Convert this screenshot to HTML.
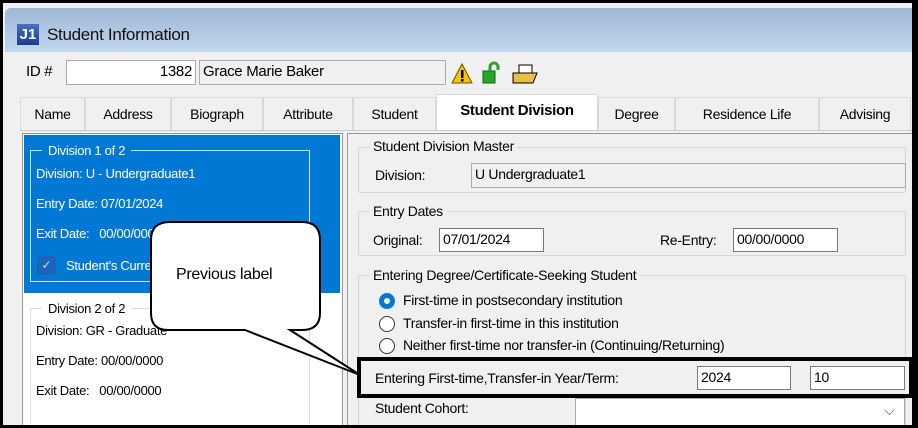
<!DOCTYPE html>
<html><head><style>
*{margin:0;padding:0;box-sizing:border-box}
html,body{width:918px;height:428px;overflow:hidden}
body{background:#000;position:relative;font-family:"Liberation Sans",sans-serif;color:#000}
.a{position:absolute}
.t{position:absolute;white-space:nowrap;font-size:14px;letter-spacing:-0.3px}
.w{font-size:13px;color:#fff}
.inp{position:absolute;background:#fff;border:1px solid #7a7a7a;font-size:14px;padding:2px 3px;white-space:nowrap;letter-spacing:-0.3px}
.grp{position:absolute;border:1px solid #d6d6d6;border-radius:2px}
.tab{position:absolute;top:97px;height:33px;background:#f0f0f0;border:1px solid #dadada;border-bottom:none;font-size:14px;text-align:center;line-height:32px;letter-spacing:-0.3px}
.rad{position:absolute;width:16px;height:16px;border-radius:50%;border:1px solid #333;background:#fff}
</style></head><body>
<div class="a" style="left:3px;top:3px;width:909px;height:422px;background:#f0f0f0"></div>
<div class="a" style="left:5px;top:8px;width:907px;height:44px;background:linear-gradient(#9fb8d6,#c2d6ed);border-radius:6px 0 0 0"></div>
<div class="a" style="left:17px;top:24px;width:22px;height:21px;background:linear-gradient(#4a6fc0,#1c3c8c);color:#fff;font-weight:bold;font-size:15px;text-align:center;line-height:21px">J1</div>
<div class="t" style="left:47px;top:25px;font-size:17px;color:#111">Student Information</div>
<div class="a" style="left:14px;top:52px;width:898px;height:373px;background:#f0f0f0"></div>
<div class="t" style="left:26px;top:63px;font-size:15px">ID #</div>
<div class="inp" style="left:66px;top:60px;width:130px;height:25px;text-align:right;font-size:15px;border-color:#aaa">1382</div>
<div class="inp" style="left:199px;top:60px;width:247px;height:25px;background:#f0f0f0;border-color:#aaa;font-size:15px">Grace Marie Baker</div>
<svg class="a" style="left:450px;top:61px" width="90" height="26"><path d="M2 22 L12 3 L22 22 Z" fill="#f5c400" stroke="#6a5000"/><rect x="11" y="9" width="2.5" height="8" fill="#000"/><rect x="11" y="18" width="2.5" height="2.5" fill="#000"/><rect x="33" y="10" width="12" height="12" fill="#2aa52a" stroke="#116611"/><path d="M40 10 V6 a4 4 0 0 1 8 0 V9" fill="none" stroke="#2aa52a" stroke-width="3"/><rect x="69" y="4" width="13" height="10" fill="#fff" stroke="#000"/><path d="M63 12 h24 l-4 10 h-20z" fill="#e8c040" stroke="#000"/></svg>
<div class="tab" style="left:20px;width:65px">Name</div>
<div class="tab" style="left:85px;width:86px">Address</div>
<div class="tab" style="left:171px;width:92px">Biograph</div>
<div class="tab" style="left:263px;width:90px">Attribute</div>
<div class="tab" style="left:353px;width:83px">Student</div>
<div class="tab" style="left:436px;top:94px;height:37px;width:162px;background:#fff;font-weight:bold;font-size:15px">Student Division</div>
<div class="tab" style="left:598px;width:77px">Degree</div>
<div class="tab" style="left:675px;width:144px">Residence Life</div>
<div class="tab" style="left:819px;width:92px">Advising</div>
<div class="a" style="left:20px;top:130px;width:892px;height:1px;background:#ccc"></div>
<!-- left panel -->
<div class="a" style="left:22px;top:133px;width:321px;height:292px;background:#fff;border:1px solid #999;border-bottom:none"></div>
<div class="a" style="left:24px;top:135px;width:316px;height:158px;background:#0078d4"></div>
<div class="a" style="left:30px;top:150px;width:280px;height:132px;border:1px solid #cfe3f7"></div>
<div class="t w" style="left:42px;top:143px;background:#0078d4;padding:0 6px">Division 1 of 2</div>
<div class="t w" style="left:36px;top:166px">Division: U - Undergraduate1</div>
<div class="t w" style="left:36px;top:196px">Entry Date: 07/01/2024</div>
<div class="t w" style="left:36px;top:226px">Exit Date: &nbsp;&nbsp;00/00/0000</div>
<div class="a" style="left:37px;top:256px;width:19px;height:19px;background:#1a65b8;border-radius:3px;color:#cde;font-size:12px;text-align:center;line-height:19px">✓</div>
<div class="t w" style="left:66px;top:258px">Student's Current</div>
<div class="a" style="left:30px;top:308px;width:280px;height:117px;border:1px solid #ddd;border-bottom:none"></div>
<div class="t" style="left:42px;top:301px;font-size:13px;background:#fff;padding:0 6px">Division 2 of 2</div>
<div class="t" style="left:36px;top:323px;font-size:13px">Division: GR - Graduate</div>
<div class="t" style="left:36px;top:353px;font-size:13px">Entry Date: 00/00/0000</div>
<div class="t" style="left:36px;top:383px;font-size:13px">Exit Date: &nbsp;&nbsp;00/00/0000</div>
<!-- right panel -->
<div class="a" style="left:347px;top:133px;width:565px;height:292px;border-left:1px solid #999;border-top:1px solid #999"></div>
<div class="grp" style="left:358px;top:147px;width:548px;height:46px"></div>
<div class="t" style="left:370px;top:138px;background:#f0f0f0;padding:0 3px">Student Division Master</div>
<div class="t" style="left:375px;top:167px">Division:</div>
<div class="inp" style="left:471px;top:163px;width:435px;height:25px;background:#f0f0f0;border-color:#aaa">U Undergraduate1</div>
<div class="grp" style="left:358px;top:211px;width:548px;height:45px"></div>
<div class="t" style="left:370px;top:203px;background:#f0f0f0;padding:0 3px">Entry Dates</div>
<div class="t" style="left:373px;top:232px">Original:</div>
<div class="inp" style="left:439px;top:228px;width:105px;height:24px">07/01/2024</div>
<div class="t" style="left:660px;top:232px">Re-Entry:</div>
<div class="inp" style="left:733px;top:228px;width:105px;height:24px">00/00/0000</div>
<div class="grp" style="left:358px;top:275px;width:548px;height:150px;border-bottom:none"></div>
<div class="t" style="left:370px;top:267px;background:#f0f0f0;padding:0 3px">Entering Degree/Certificate-Seeking Student</div>
<div class="rad" style="left:379px;top:293px;border-color:#0078d4;border-width:5px;background:#fff"></div>
<div class="t" style="left:403px;top:292px">First-time in postsecondary institution</div>
<div class="rad" style="left:379px;top:316px"></div>
<div class="t" style="left:403px;top:315px">Transfer-in first-time in this institution</div>
<div class="rad" style="left:379px;top:338px"></div>
<div class="t" style="left:403px;top:337px">Neither first-time nor transfer-in (Continuing/Returning)</div>
<div class="a" style="left:357px;top:357px;width:556px;height:41px;border:4px solid #000;background:#f0f0f0"></div>
<div class="t" style="left:375px;top:370px">Entering First-time,Transfer-in Year/Term:</div>
<div class="inp" style="left:697px;top:366px;width:94px;height:24px">2024</div>
<div class="inp" style="left:810px;top:366px;width:95px;height:24px">10</div>
<div class="t" style="left:375px;top:400px">Student Cohort:</div>
<div class="inp" style="left:575px;top:398px;width:330px;height:27px;border-color:#aaa;border-bottom:none"></div>
<div class="t" style="left:884px;top:402px;color:#555">⌵</div>
<!-- callout -->
<svg class="a" style="left:0;top:0" width="918" height="428">
<path d="M170 222 H302 Q320 222 320 240 V313 Q320 330 302 330 H290 L360 375 L245 330 H168 Q151 330 151 313 V240 Q151 222 170 222 Z" fill="#fff" stroke="#000" stroke-width="2"/>
</svg>
<div class="t" style="left:176px;top:266px;font-size:16px">Previous label</div>
<div class="a" style="left:0;top:425px;width:918px;height:3px;background:#000"></div>
</body></html>
